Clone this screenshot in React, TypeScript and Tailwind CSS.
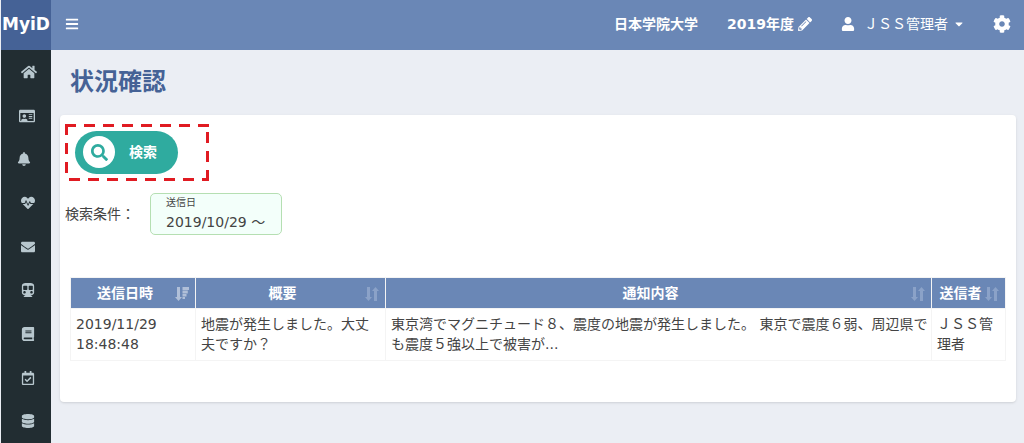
import React from "react";
import {
  FaBars, FaHome, FaRegIdCard, FaBell, FaHeartbeat, FaEnvelope, FaSubway, FaBook,
  FaRegCalendarCheck, FaDatabase, FaPencilAlt, FaUser, FaCaretDown, FaCog, FaSearch,
} from "react-icons/fa";

const menu = [
  { label: "ホーム", icon: FaHome, cls: "ml-5 size-4" },
  { label: "学生証", icon: FaRegIdCard, cls: "ml-[18px] size-4" },
  { label: "お知らせ", icon: FaBell, cls: "ml-4 size-[14px]" },
  { label: "健康", icon: FaHeartbeat, cls: "ml-5 size-[14px]" },
  { label: "メール", icon: FaEnvelope, cls: "ml-5 size-[14px]" },
  { label: "交通", icon: FaSubway, cls: "ml-5 size-[14px]" },
  { label: "教科書", icon: FaBook, cls: "ml-5 size-[14px]" },
  { label: "予定", icon: FaRegCalendarCheck, cls: "ml-5 size-[14px]" },
  { label: "データ", icon: FaDatabase, cls: "ml-5 size-[14px]" },
];

function SortBoth() {
  return (
    <svg viewBox="0 0 14 16" className="h-4 w-[14px]" fill="currentColor" aria-hidden="true">
      <path d="M2 1h3v10h2L3.500 15 0 11h2zM9 15h3V5h2L10.500 1 7 5h2z" />
    </svg>
  );
}

function SortDesc() {
  return (
    <svg viewBox="0 0 14 16" className="h-4 w-[14px]" fill="currentColor" aria-hidden="true">
      <path d="M2 1h3v10h2L3.500 15 0 11h2zM7.500 1H14v3H7.500zM7.500 4.500h5.300v3H7.500zM7.500 8h4v2.500h-4zM7.500 11h2.500v2H7.500z" />
    </svg>
  );
}

const columns = [
  { title: "送信日時", width: "w-[125px]", sorted: true },
  { title: "概要", width: "w-[190px]", sorted: false },
  { title: "通知内容", width: "", sorted: false },
  { title: "送信者", width: "w-[74px]", sorted: false },
];

const rows = [
  [
    "2019/11/29 18:48:48",
    "地震が発生しました。大丈夫ですか？",
    "東京湾でマグニチュード８、震度の地震が発生しました。 東京で震度６弱、周辺県でも震度５強以上で被害が...",
    "ＪＳＳ管理者",
  ],
];

export default function App() {
  return (
    <div className="flex h-screen overflow-hidden bg-[#ebeef4] pl-px font-['DejaVu_Sans','Noto_Sans_CJK_JP',sans-serif] text-sm text-[#444]">
      <aside className="flex w-[50px] shrink-0 flex-col bg-[#222d32]">
        <a href="#" className="flex h-[50px] shrink-0 items-center justify-center bg-[#456296] pb-[2px] text-[17px] font-bold text-white">
          MyiD
        </a>
        <nav className="flex h-[393px] flex-col text-[#b8c7ce]">
          {menu.map(({ label, icon: Icon, cls }) => (
            <a key={label} href="#" aria-label={label} className="flex flex-1 items-center">
              <Icon className={cls} />
            </a>
          ))}
        </nav>
      </aside>
      <div className="flex min-w-0 flex-1 flex-col">
        <header className="flex h-[50px] shrink-0 items-center justify-between bg-[#6a87b6] pr-[13px] pb-[2px] pl-[14px] text-white">
          <button aria-label="メニュー"><FaBars className="size-[14px]" /></button>
          <div className="flex items-center">
            <span className="font-bold">日本学院大学</span>
            <a href="#" className="ml-[29px] flex items-center gap-1 font-bold">
              2019年度<FaPencilAlt className="size-[14px]" />
            </a>
            <button className="ml-[29px] flex items-center">
              <FaUser className="mr-[9px] size-[14px]" />ＪＳＳ管理者
              <FaCaretDown className="ml-[5px] size-3" />
            </button>
            <button aria-label="設定" className="ml-7"><FaCog className="size-[18px]" /></button>
          </div>
        </header>
        <main className="pr-2 pl-[9px]">
          <h1 className="flex h-[65px] items-center pb-[2px] pl-[10px] text-2xl font-bold text-[#456296]">状況確認</h1>
          <section className="rounded-sm bg-white px-[5px] pt-[9px] pb-[41px] shadow-sm">
            <div className="relative flex h-[57px] w-[144px] items-center pl-[10px]">
              <svg className="pointer-events-none absolute inset-0 size-full" viewBox="0 0 144 57" fill="none" stroke="#e01b22" strokeWidth="3" strokeDasharray="11 8" aria-hidden="true">
                <path d="M0 1.500H144M1.500 0V57M142.500 57V0" />
                <path d="M4 55.500H144" />
              </svg>
              <button className="flex h-[43px] w-[103px] items-center gap-[14px] rounded-full bg-[#2fab9f] pb-px pl-2 font-bold text-white">
                <span className="flex size-8 items-center justify-center rounded-full bg-white text-[#2fab9f]">
                  <FaSearch className="size-[17px]" />
                </span>
                検索
              </button>
            </div>
            <div className="mt-3 flex items-center gap-[15px]">
              <span>検索条件：</span>
              <div className="h-[42px] w-[132px] rounded-[5px] border border-[#b5dfb2] bg-[#f3fffa] pt-[3px] pl-[15px]">
                <div className="text-[10px] leading-3">送信日</div>
                <div className="leading-[26px]">2019/10/29 ～</div>
              </div>
            </div>
            <div className="mt-[42px] px-[5px]">
              <table className="w-full table-fixed border-collapse">
                <thead>
                  <tr className="h-[31px] bg-[#6a87b6] text-white">
                    {columns.map((c) => (
                      <th key={c.title} className={`${c.width} border border-[#f4f4f4] p-0 font-bold`}>
                        <div className="relative pr-4">
                          {c.title}
                          <span className={`absolute right-[6px] bottom-px ${c.sorted ? "text-[#b0bfd8]" : "text-[#8ba2c8]"}`}>
                            {c.sorted ? <SortDesc /> : <SortBoth />}
                          </span>
                        </div>
                      </th>
                    ))}
                  </tr>
                </thead>
                <tbody>
                  {rows.map((r) => (
                    <tr key={r[0]}>
                      {r.map((cell) => (
                        <td key={cell} className="border border-[#f4f4f4] pt-[5px] pr-[3px] pb-[6px] pl-[5px] align-top leading-5">{cell}</td>
                      ))}
                    </tr>
                  ))}
                </tbody>
              </table>
            </div>
          </section>
        </main>
      </div>
    </div>
  );
}
